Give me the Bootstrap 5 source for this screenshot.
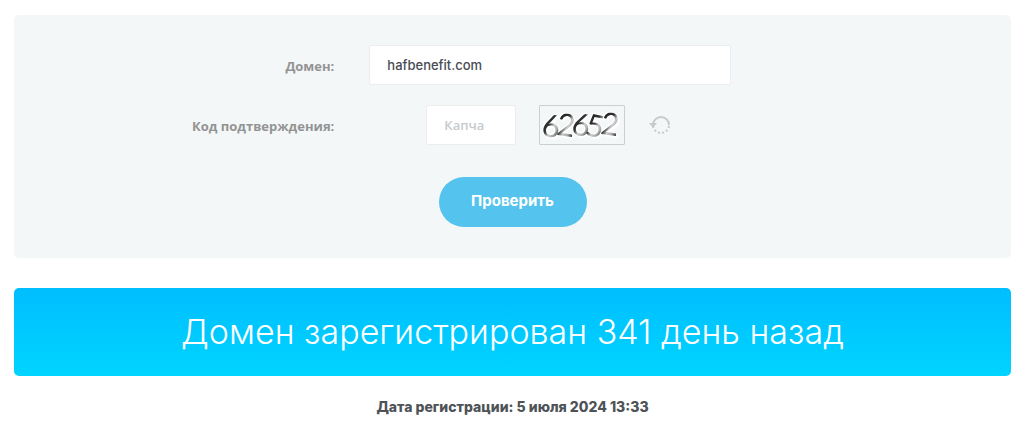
<!DOCTYPE html>
<html lang="ru">
<head>
<meta charset="utf-8">
<meta name="viewport" content="width=device-width, initial-scale=1">
<title>Проверка возраста домена</title>
<link href="https://cdn.jsdelivr.net/npm/bootstrap@5.3.0/dist/css/bootstrap.min.css" rel="stylesheet">
<style>
  body { font-family: Inter, "Open Sans", sans-serif; color: #4e5357; background: #fff; }
  .page { padding: 15px 19px 0 14px; }
  .panel { background: #f3f7f8; border-radius: 5px; padding: 30px 0 31px; margin-bottom: 30px; }
  .field-label { font-family: "Open Sans", sans-serif; font-size: 13px; font-weight: 700; line-height: 20px; color: #939393; }
  .field-cell { padding-left: 23px; }
  .field-box { max-width: 362px; }
  .panel .form-control { height: 40px; border: 1px solid #ebedf0; border-radius: 2px; padding: 0 17px; font-size: 13px; font-weight: 500; color: #474c54; }
  .panel .form-control::placeholder { color: #c5cace; font-family: "Open Sans", sans-serif; font-weight: 600; }
  .panel .captcha-input { width: 90px; }
  .captcha-gap { gap: 23px; }
  .captcha { width: 86px; height: 40px; border: 1px solid #cdd0d2; border-radius: 1px; overflow: visible; }
  .captcha text { font: 400 31px Lato, sans-serif; }
  .captcha g { filter: drop-shadow(1px 1px 0 #fff) drop-shadow(-1px -1px 0 #fff) drop-shadow(1px 1px 1px #fff); }
  .btn-check-domain { --bs-btn-color: #fff; --bs-btn-bg: #54c3ed; --bs-btn-hover-color: #fff; --bs-btn-hover-bg: #3db5e2; width: 148px; height: 50px; padding: 0 0 2px; font-size: 15px; font-weight: 700; border: 0; }
  .result { background: linear-gradient(#00beff, #00d4ff); border-radius: 5px; padding: 24px 16px; margin-bottom: 21px; font-size: 34px; font-weight: 300; line-height: 40px; }
  .reg-date { font-size: 14px; font-weight: 800; line-height: 20px; }
</style>
</head>
<body>
<main class="page">
  <form class="panel">
    <div class="row g-0 align-items-center mb-3 pb-1">
      <div class="col-4 text-end"><label class="field-label pe-2 me-1" for="domain">Домен:</label></div>
      <div class="col-8 field-cell"><div class="field-box"><input class="form-control" id="domain" type="text" value="hafbenefit.com"></div></div>
    </div>
    <div class="row g-0 align-items-center">
      <div class="col-4 text-end"><label class="field-label pe-2 me-1" for="code">Код подтверждения:</label></div>
      <div class="col-8 field-cell">
        <div class="field-box captcha-gap d-flex justify-content-center align-items-center">
          <input class="form-control captcha-input" id="code" type="text" placeholder="Капча">
          <svg class="captcha flex-shrink-0" viewBox="0 0 84 38" role="img" aria-label="Капча">
            <defs>
              <linearGradient id="ink" x1="0" y1="0" x2="1" y2="1">
                <stop offset="0" stop-color="#111"/><stop offset=".45" stop-color="#333"/><stop offset=".58" stop-color="#ccc"/><stop offset=".72" stop-color="#aaa"/><stop offset=".85" stop-color="#333"/><stop offset="1" stop-color="#222"/>
              </linearGradient>
            </defs>
            <g fill="url(#ink)">
              <text x="2" y="31" transform="rotate(6 10 20)">6</text>
              <text x="17" y="30" transform="rotate(8 26 20)">2</text>
              <text x="32" y="30" transform="rotate(10 42 20)">6</text>
              <text x="46" y="31" transform="rotate(12 56 20)">5</text>
              <text x="61" y="29" transform="rotate(8 70 20)">2</text>
            </g>
          </svg>
          <button class="btn p-0 border-0 lh-1 me-1" type="button" aria-label="Обновить код">
            <svg width="22" height="20" viewBox="0 0 22 20" fill="none" stroke="#c6cacd" stroke-width="2">
              <path d="M5 10a8 8 0 1 1 16 0"/>
              <path d="M21 10a8 8 0 0 1-16 0" stroke-dasharray="2 2.200" stroke-dashoffset="-1"/>
              <path d="M1 8h8l-4 5z" fill="#c6cacd" stroke="none"/>
            </svg>
          </button>
        </div>
      </div>
    </div>
    <div class="text-center pt-2 mt-4"><button class="btn btn-check-domain rounded-pill" type="submit">Проверить</button></div>
  </form>
  <h1 class="result text-center text-white">Домен зарегистрирован 341 день назад</h1>
  <p class="reg-date text-center mb-0">Дата регистрации: 5 июля 2024 13:33</p>
</main>
<script src="https://cdn.jsdelivr.net/npm/bootstrap@5.3.0/dist/js/bootstrap.bundle.min.js"></script>
</body>
</html>
